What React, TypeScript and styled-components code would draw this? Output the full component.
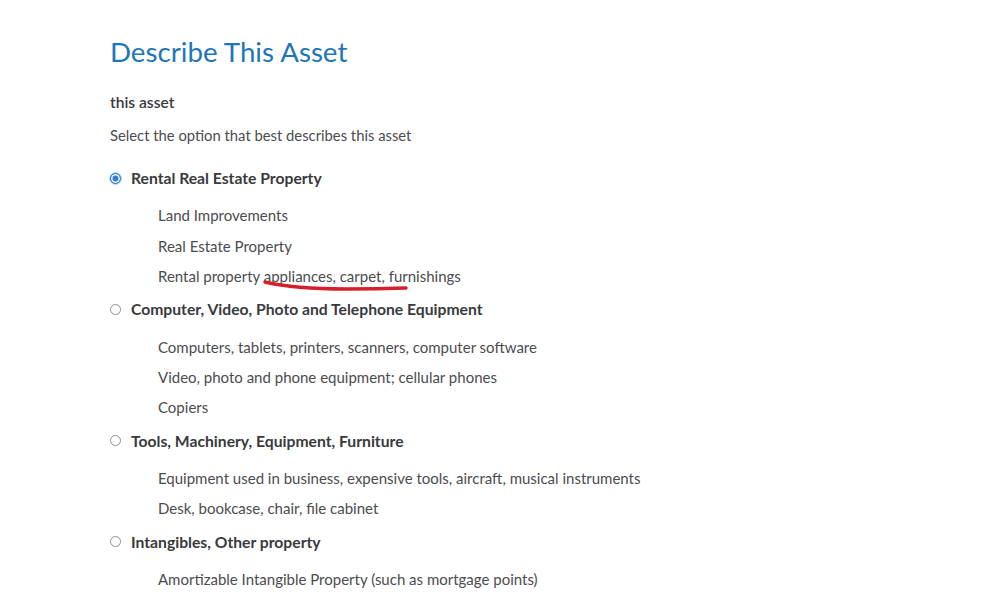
import React from "react";
import styled, { createGlobalStyle } from "styled-components";

const Global = createGlobalStyle`
  html, body { margin: 0; padding: 0; background: #fff; }
  body { font-family: Lato, "Open Sans", sans-serif; color: #393a3d; }
`;

const Page = styled.div`
  padding: 36px 0 0 110px;
  display: flex;
  flex-direction: column;
`;

const Title = styled.h1`
  margin: 0;
  font-size: 27.7px;
  line-height: 32px;
  font-weight: 400;
  color: #1f76b7;
`;

const Label = styled.div`
  margin-top: 24px;
  font-size: 15.6px;
  line-height: 20px;
  font-weight: 600;
  color: #393a3d;
`;

const Hint = styled.div`
  margin-top: 13px;
  font-size: 14.8px;
  line-height: 20px;
  color: #4b4c4f;
`;

const Groups = styled.div`
  margin-top: 18px;
  display: flex;
  flex-direction: column;
  gap: 3.2px;
`;

const Group = styled.div`
  display: flex;
  flex-direction: column;
`;

const Header = styled.label`
  display: flex;
  align-items: center;
  gap: 10px;
  height: 30px;
  font-size: 15.7px;
  font-weight: 700;
  color: #393a3d;
`;

const Radio = styled.span<{ $checked?: boolean }>`
  width: 9px;
  height: 9px;
  border-radius: 50%;
  border: 1px solid ${(p) => (p.$checked ? "#2f7fd6" : "#8d9096")};
  background: ${(p) => (p.$checked ? "#2f7fd6" : "#fff")};
  box-shadow: ${(p) =>
    p.$checked ? "inset 0 0 0 1.5px #fff, 0 0 0 1px #bcd6f2" : "none"};
  flex: none;
`;

const Items = styled.div`
  display: flex;
  flex-direction: column;
  padding: 7.3px 0 0 48px;
`;

const Item = styled.div`
  position: relative;
  height: 30.3px;
  line-height: 30px;
  font-size: 15px;
  color: #4b4c4f;
`;

const Scribble = styled.svg`
  position: absolute;
  left: 103px;
  top: 17px;
  pointer-events: none;
`;

const groups = [
  {
    title: "Rental Real Estate Property",
    checked: true,
    items: [
      "Land Improvements",
      "Real Estate Property",
      "Rental property appliances, carpet, furnishings",
    ],
  },
  {
    title: "Computer, Video, Photo and Telephone Equipment",
    items: [
      "Computers, tablets, printers, scanners, computer software",
      "Video, photo and phone equipment; cellular phones",
      "Copiers",
    ],
  },
  {
    title: "Tools, Machinery, Equipment, Furniture",
    items: [
      "Equipment used in business, expensive tools, aircraft, musical instruments",
      "Desk, bookcase, chair, file cabinet",
    ],
  },
  {
    title: "Intangibles, Other property",
    items: ["Amortizable Intangible Property (such as mortgage points)"],
  },
];

export default function App() {
  return (
    <>
      <Global />
      <Page>
        <Title>Describe This Asset</Title>
        <Label>this asset</Label>
        <Hint>Select the option that best describes this asset</Hint>
        <Groups>
          {groups.map((g) => (
            <Group key={g.title}>
              <Header>
                <Radio $checked={g.checked} />
                {g.title}
              </Header>
              <Items>
                {g.items.map((it) => (
                  <Item key={it}>
                    {it}
                    {it.startsWith("Rental property") && (
                      <Scribble width="150" height="16" viewBox="0 0 150 16">
                        <path
                          d="M4 4 C 25 9, 55 11, 85 11 S 130 10.5, 145 10"
                          fill="none"
                          stroke="#d3202b"
                          strokeWidth="3.4"
                          strokeLinecap="round"
                        />
                      </Scribble>
                    )}
                  </Item>
                ))}
              </Items>
            </Group>
          ))}
        </Groups>
      </Page>
    </>
  );
}
